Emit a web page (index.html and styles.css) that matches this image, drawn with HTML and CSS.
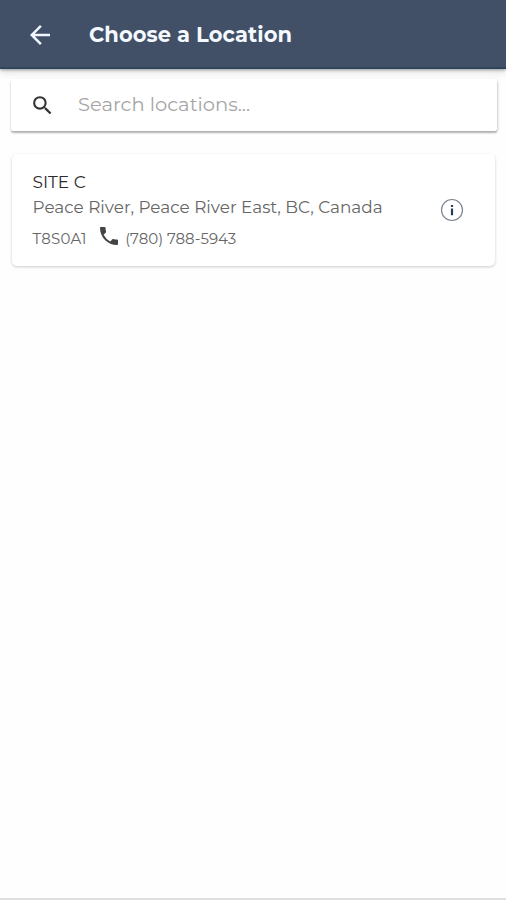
FILE: index.html
```html
<!DOCTYPE html>
<html lang="en">
<head>
<meta charset="utf-8">
<title>Choose a Location</title>
<link rel="stylesheet" href="styles.css">
</head>
<body>
<header class="bar">
  <svg class="back" viewBox="0 0 24 24"><path d="M20 11H7.83l5.59-5.59L12 4l-8 8 8 8 1.41-1.41L7.83 13H20v-2z"/></svg>
  <h1 class="title">Choose a Location</h1>
</header>
<main class="content">
  <div class="search">
    <svg class="search-icon" viewBox="0 0 24 24"><path d="M15.5 14h-.79l-.28-.27A6.47 6.47 0 0 0 16 9.5 6.5 6.5 0 1 0 9.5 16c1.61 0 3.09-.59 4.23-1.57l.27.28v.79l5 4.99L20.49 19l-4.99-5zm-6 0a4.5 4.5 0 1 1 0-9 4.5 4.5 0 0 1 0 9z"/></svg>
    <span class="placeholder">Search locations...</span>
  </div>
  <article class="card">
    <div class="details">
      <div class="name">SITE C</div>
      <div class="address">Peace River, Peace River East, BC, Canada</div>
      <div class="contact">
        <span class="postal">T8S0A1</span>
        <svg class="phone-icon" viewBox="3 3 18 18"><path d="M6.62 10.79a15.15 15.15 0 0 0 6.59 6.59l2.2-2.2c.27-.27.67-.36 1.02-.24 1.12.37 2.33.57 3.57.57.55 0 1 .45 1 1V20c0 .55-.45 1-1 1C10.61 21 3 13.39 3 4c0-.55.45-1 1-1h3.5c.55 0 1 .45 1 1 0 1.25.2 2.45.57 3.57.11.35.03.74-.25 1.02l-2.2 2.2z"/></svg>
        <span class="phone">(780) 788-5943</span>
      </div>
    </div>
    <svg class="info" viewBox="0 0 24 24"><circle cx="12" cy="12" r="10.5"/><path d="M10.9 7h2.2v2h-2.2zM10.9 10.4h2.2v6.8h-2.2z"/></svg>
  </article>
</main>
</body>
</html>
```
FILE: styles.css
```css
* { box-sizing: border-box; }
body {
  margin: 0;
  height: 900px;
  display: flex;
  flex-direction: column;
  background: #fefefe;
  border-bottom: 2px solid #dedede;
  font-family: Montserrat, Inter, sans-serif;
  white-space: nowrap;
  overflow: hidden;
}
.bar {
  height: 69px;
  flex: none;
  display: flex;
  align-items: center;
  padding-left: 25px;
  background: #415066;
  border-bottom: 2px solid #2c465c;
  box-shadow: 0 1px 3px rgba(0, 0, 0, .35), 0 4px 8px rgba(0, 0, 0, .1);
}
.back { width: 30px; height: 30px; fill: #f0f5ff; margin-top: 3px; }
.title { margin: 2px 0 0 34px; font-size: 21px; line-height: 28px; font-weight: 700; color: #f4f8ff; letter-spacing: .06px; }
.content { padding: 10px 9px 0 11px; }
.search {
  height: 52px;
  display: flex;
  align-items: center;
  padding-left: 19px;
  background: #fff;
  border-radius: 2px;
  box-shadow: 0 2px 2px rgba(0, 0, 0, .26), 1px 1px 3px rgba(0, 0, 0, .12);
}
.search-icon { width: 25px; height: 25px; fill: #333; }
.placeholder { margin: -2px 0 0 23px; font-size: 19.5px; line-height: 26px; color: #a5a5a5; }
.card {
  height: 112px;
  margin: 23px 2px 0 1px;
  display: flex;
  align-items: center;
  justify-content: space-between;
  padding: 0 31.5px 0 20.5px;
  background: #fff;
  border-radius: 5px;
  box-shadow: 0 1px 3px rgba(0, 0, 0, .2);
}
.details { height: 112px; padding-top: 15px; }
.name { font-size: 17px; line-height: 26px; color: #2b2b2b; }
.address { font-size: 16.85px; line-height: 25px; color: #666; }
.contact { display: flex; height: 37px; align-items: center; font-size: 15px; color: #666; }
.postal { letter-spacing: .25px; }
.phone-icon { width: 18px; height: 18px; fill: #444; margin: -6px 7px 0 13.5px; }
.info { width: 24px; height: 24px; fill: #233e5b; }
.info circle { fill: none; stroke: #7c8490; stroke-width: 1.2; }
```
